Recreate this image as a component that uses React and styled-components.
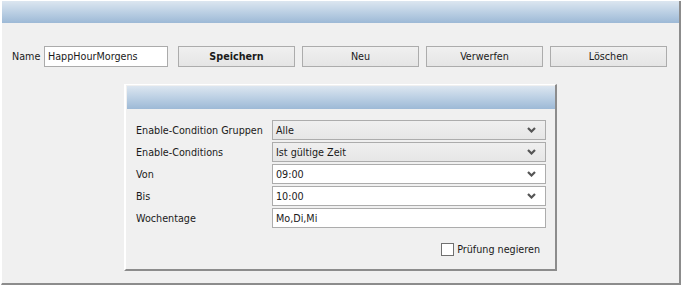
import React from 'react';
import styled, { createGlobalStyle } from 'styled-components';

const GlobalStyle = createGlobalStyle`
  html, body {
    margin: 0;
    padding: 0;
    background: #ffffff;
  }
  body {
    font-family: "DejaVu Sans Condensed", "Liberation Sans", Arial, sans-serif;
    font-size: 10.7px;
    color: #1a1a1a;
  }
`;

const Window = styled.div`
  box-sizing: border-box;
  margin: 1px 0 0 1px;
  width: 680px;
  height: 284px;
  background: #f0f0f0;
  border-left: 1px solid #ffffff;
  border-right: 2px solid #8c8c8c;
  border-bottom: 2px solid #8c8c8c;
  display: flex;
  flex-direction: column;
  align-items: stretch;
`;

const TitleBar = styled.div`
  height: ${p => p.$h}px;
  flex-shrink: 0;
  background: linear-gradient(to bottom, #dce6f0 0%, #bcd0e4 50%, #9db9d6 100%);
`;

const Toolbar = styled.div`
  display: flex;
  align-items: center;
  padding: 23px 0 0 10px;
  height: 21px;
`;

const Label = styled.span`
  white-space: nowrap;
  width: ${p => (p.$w ? `${p.$w}px` : 'auto')};
  flex-shrink: 0;
`;

const TextBox = styled.div`
  box-sizing: border-box;
  width: ${p => p.$w}px;
  height: ${p => p.$h || 21}px;
  background: #ffffff;
  border: 1px solid #ababab;
  padding: 0 3px;
  display: flex;
  align-items: center;
  white-space: nowrap;
`;

const Button = styled.div`
  box-sizing: border-box;
  width: 117px;
  height: 21px;
  margin-left: ${p => p.$ml}px;
  border: 1px solid #acacac;
  background: linear-gradient(to bottom, #f0f0f0, #e5e5e5);
  display: flex;
  align-items: center;
  justify-content: center;
  font-weight: ${p => (p.$bold ? 'bold' : 'normal')};
`;

const Panel = styled.div`
  box-sizing: border-box;
  align-self: center;
  width: 433px;
  height: 187px;
  margin-top: 17px;
  background: #f0f0f0;
  border-left: 2px solid #ffffff;
  border-top: 1px solid #ffffff;
  border-right: 2px solid #8c8c8c;
  border-bottom: 2px solid #8c8c8c;
  padding: 1px 0 0 1px;
  display: flex;
  flex-direction: column;
`;

const Form = styled.div`
  display: grid;
  grid-template-columns: 136px 274px;
  grid-auto-rows: 20px;
  row-gap: 2px;
  padding: 11px 0 0 9px;
  align-items: center;
`;

const Select = styled.div`
  box-sizing: border-box;
  height: 20px;
  border: 1px solid #acacac;
  background: ${p => (p.$gray ? 'linear-gradient(to bottom, #efefef, #e6e6e6)' : '#ffffff')};
  display: flex;
  align-items: center;
  justify-content: space-between;
  padding: 0 9px 0 3px;
`;

const Field = styled.div`
  box-sizing: border-box;
  height: 20px;
  border: 1px solid #acacac;
  background: #ffffff;
  display: flex;
  align-items: center;
  padding: 0 3px;
`;

const Footer = styled.div`
  display: flex;
  justify-content: flex-end;
  align-items: center;
  padding: 15px 15px 0 0;
`;

const Check = styled.span`
  box-sizing: border-box;
  width: 13px;
  height: 13px;
  border: 1px solid #707070;
  background: #ffffff;
  margin-right: 3px;
`;

const Chevron = () => (
  <svg width="9" height="6" viewBox="0 0 9 6">
    <polyline points="1,1 4.5,4.5 8,1" fill="none" stroke="#555" strokeWidth="2.2" />
  </svg>
);

const rows = [
  { label: 'Enable-Condition Gruppen', value: 'Alle', kind: 'gray' },
  { label: 'Enable-Conditions', value: 'Ist gültige Zeit', kind: 'gray' },
  { label: 'Von', value: '09:00', kind: 'white' },
  { label: 'Bis', value: '10:00', kind: 'white' },
  { label: 'Wochentage', value: 'Mo,Di,Mi', kind: 'text' },
];

export default function App() {
  return (
    <>
      <GlobalStyle />
      <Window>
        <TitleBar $h={22} />
        <Toolbar>
          <Label $w={32}>Name</Label>
          <TextBox $w={124}>HappHourMorgens</TextBox>
          <Button $ml={10} $bold>Speichern</Button>
          <Button $ml={7}>Neu</Button>
          <Button $ml={7}>Verwerfen</Button>
          <Button $ml={7}>Löschen</Button>
        </Toolbar>
        <Panel>
          <TitleBar $h={23} />
          <Form>
            {rows.map(r => (
              <React.Fragment key={r.label}>
                <Label>{r.label}</Label>
                {r.kind === 'text' ? (
                  <Field>{r.value}</Field>
                ) : (
                  <Select $gray={r.kind === 'gray'}>
                    <span>{r.value}</span>
                    <Chevron />
                  </Select>
                )}
              </React.Fragment>
            ))}
          </Form>
          <Footer>
            <Check />
            <Label>Prüfung negieren</Label>
          </Footer>
        </Panel>
      </Window>
    </>
  );
}
